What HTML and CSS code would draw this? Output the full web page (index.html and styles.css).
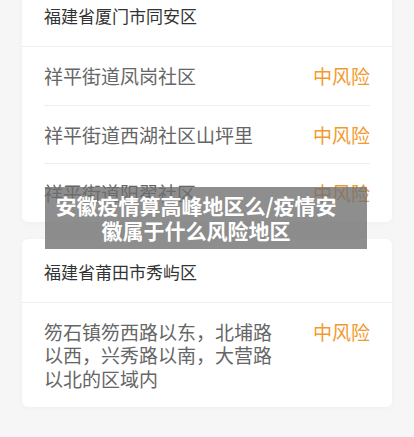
FILE: index.html
```html
<!DOCTYPE html>
<html lang="zh-CN">
<head>
  <meta charset="UTF-8" />
  <meta name="viewport" content="width=device-width, initial-scale=1.0" />
  <title>安徽疫情算高峰地区么</title>
  <link rel="stylesheet" href="styles.css">
</head>
<body>
  <div class="page">
    <div class="card card-first">
      <div class="card-head">福建省厦门市同安区</div>
      <ul class="risk-list">
        <li class="risk-row">
          <span class="place">祥平街道凤岗社区</span>
          <span class="level">中风险</span>
        </li>
        <li class="risk-row">
          <span class="place">祥平街道西湖社区山坪里</span>
          <span class="level">中风险</span>
        </li>
        <li class="risk-row">
          <span class="place">祥平街道阳翟社区</span>
          <span class="level">中风险</span>
        </li>
      </ul>
    </div>

    <div class="card">
      <div class="card-head">福建省莆田市秀屿区</div>
      <ul class="risk-list">
        <li class="risk-row">
          <span class="place">笏石镇笏西路以东，北埔路以西，兴秀路以南，大营路以北的区域内</span>
          <span class="level">中风险</span>
        </li>
      </ul>
    </div>

    <div class="title-banner">安徽疫情算高峰地区么/疫情安徽属于什么风险地区</div>
  </div>
</body>
</html>
```

FILE: styles.css
```css
body {
  margin: 0;
  background: #f6f6f6;
  font-family: "Noto Sans CJK SC", "Noto Sans", sans-serif;
  overflow: hidden;
}
.page {
  position: relative;
  padding: 0 22px;
}
.card {
  background: #fff;
  border-radius: 6px;
  box-shadow: 0 1px 6px rgba(0,0,0,0.03);
  margin-bottom: 17px;
}
.card-first {
  margin-top: -17px;
  border-top-left-radius: 0;
  border-top-right-radius: 0;
}
.card-head {
  padding: 21px 22px 18px;
  font-size: 17px;
  line-height: 24px;
  color: #333;
  border-bottom: 1px solid #eee;
}
.risk-list {
  list-style: none;
  margin: 0 22px;
  padding: 0;
}
.risk-row {
  display: flex;
  justify-content: space-between;
  align-items: flex-start;
  gap: 30px;
  padding: 17px 0;
  border-bottom: 1px solid #eee;
  font-size: 19px;
  line-height: 23.5px;
}
.risk-row:last-child {
  border-bottom: none;
}
.place {
  color: #666;
  flex: 1;
}
.level {
  color: #f29a2e;
  white-space: nowrap;
}
.title-banner {
  position: absolute;
  left: 45px;
  top: 204px;
  width: 322px;
  box-sizing: border-box;
  padding: 6px 24px 6px 4px;
  background: rgba(110,110,110,0.78);
  color: #fff;
  font-size: 21px;
  font-weight: bold;
  line-height: 25px;
  text-align: center;
}
```
